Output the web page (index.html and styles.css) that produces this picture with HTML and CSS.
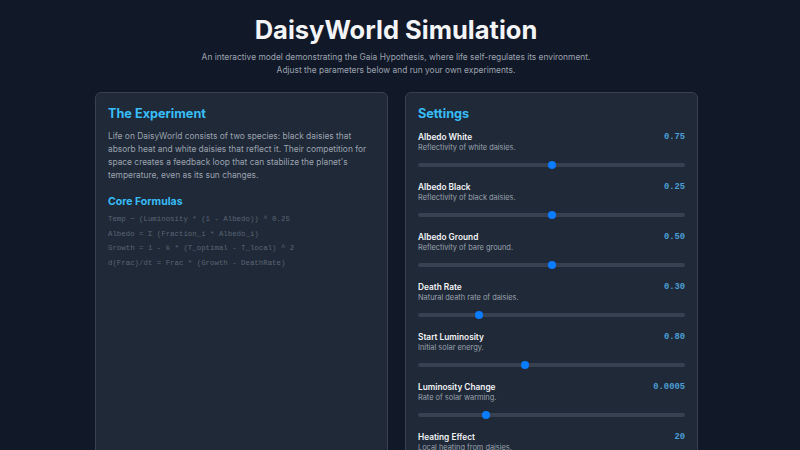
FILE: index.html
```html
<!DOCTYPE html>
<html lang="en">
<head>
<meta charset="utf-8">
<title>DaisyWorld Simulation</title>
<link rel="stylesheet" href="styles.css">
</head>
<body>
<header class="hero">
  <h1 class="hero-title">DaisyWorld Simulation</h1>
  <p class="hero-sub">An interactive model demonstrating the Gaia Hypothesis, where life self-regulates its environment.<br>Adjust the parameters below and run your own experiments.</p>
</header>
<main class="layout">
  <section class="panel">
    <h2 class="panel-title">The Experiment</h2>
    <p class="intro">Life on DaisyWorld consists of two species: black daisies that absorb heat and white daisies that reflect it. Their competition for space creates a feedback loop that can stabilize the planet's temperature, even as its sun changes.</p>
    <h3 class="sub-title">Core Formulas</h3>
    <div class="formulas">
      <div>Temp − (Luminosity * (1 - Albedo)) ^ 0.25</div>
      <div>Albedo = Σ (Fraction_i * Albedo_i)</div>
      <div>Growth = 1 - k * (T_optimal - T_local) ^ 2</div>
      <div>d(Frac)/dt = Frac * (Growth - DeathRate)</div>
    </div>
  </section>
  <section class="panel">
    <h2 class="panel-title">Settings</h2>
    <div class="setting">
      <div class="setting-head"><span class="setting-name">Albedo White</span><span class="setting-value">0.75</span></div>
      <div class="setting-desc">Reflectivity of white daisies.</div>
      <div class="track"><span class="thumb" style="left:50%"></span></div>
    </div>
    <div class="setting">
      <div class="setting-head"><span class="setting-name">Albedo Black</span><span class="setting-value">0.25</span></div>
      <div class="setting-desc">Reflectivity of black daisies.</div>
      <div class="track"><span class="thumb" style="left:50%"></span></div>
    </div>
    <div class="setting">
      <div class="setting-head"><span class="setting-name">Albedo Ground</span><span class="setting-value">0.50</span></div>
      <div class="setting-desc">Reflectivity of bare ground.</div>
      <div class="track"><span class="thumb" style="left:50%"></span></div>
    </div>
    <div class="setting">
      <div class="setting-head"><span class="setting-name">Death Rate</span><span class="setting-value">0.30</span></div>
      <div class="setting-desc">Natural death rate of daisies.</div>
      <div class="track"><span class="thumb" style="left:22.9%"></span></div>
    </div>
    <div class="setting">
      <div class="setting-head"><span class="setting-name">Start Luminosity</span><span class="setting-value">0.80</span></div>
      <div class="setting-desc">Initial solar energy.</div>
      <div class="track"><span class="thumb" style="left:40.2%"></span></div>
    </div>
    <div class="setting">
      <div class="setting-head"><span class="setting-name">Luminosity Change</span><span class="setting-value">0.0005</span></div>
      <div class="setting-desc">Rate of solar warming.</div>
      <div class="track"><span class="thumb" style="left:25.6%"></span></div>
    </div>
    <div class="setting">
      <div class="setting-head"><span class="setting-name">Heating Effect</span><span class="setting-value">20</span></div>
      <div class="setting-desc">Local heating from daisies.</div>
      <div class="track"><span class="thumb" style="left:50%"></span></div>
    </div>
  </section>
</main>
</body>
</html>
```
FILE: styles.css
```css
* { box-sizing: border-box; }
html, body { margin: 0; padding: 0; }
body {
  background: #111827;
  color: #e5e7eb;
  font-family: Inter, "Noto Sans", sans-serif;
  height: 450px;
  overflow: hidden;
}
.hero { text-align: center; padding-top: 13px; padding-right: 8px; }
.hero-title {
  margin: 0;
  font-size: 25.5px;
  line-height: 34px;
  font-weight: 700;
  color: #f3f4f6;
}
.hero-sub {
  margin: 4px 0 0;
  font-size: 8.4px;
  line-height: 13px;
  color: #9ca3af;
}
.layout {
  display: grid;
  grid-template-columns: 293px 293px;
  gap: 17px;
  width: 603px;
  margin: 15px 0 0 95px;
}
.panel {
  background: #1f2937;
  border: 1px solid #374151;
  border-radius: 6px;
  padding: 13px 12px 12px;
  height: 400px;
}
.panel-title {
  margin: 0;
  font-size: 12.7px;
  line-height: 16px;
  font-weight: 700;
  color: #38bdf8;
}
.intro {
  margin: 8px 0 0;
  font-size: 8.4px;
  line-height: 13px;
  color: #9ca3af;
}
.sub-title {
  margin: 12px 0 0;
  font-size: 10.5px;
  line-height: 16px;
  font-weight: 700;
  color: #38bdf8;
}
.formulas {
  margin-top: 2px;
  font-family: "Liberation Mono", "DejaVu Sans Mono", monospace;
  font-size: 7.4px;
  line-height: 14.6px;
  color: #5b6575;
}
.setting { padding-top: 9px; }
.setting + .setting { padding-top: 14px; }
.setting-head {
  display: flex;
  justify-content: space-between;
  align-items: center;
  height: 12px;
}
.setting-name {
  font-size: 8.3px;
  font-weight: 600;
  color: #f3f4f6;
}
.setting-value {
  font-family: "Liberation Mono", "DejaVu Sans Mono", monospace;
  font-size: 8.8px;
  font-weight: 700;
  color: #4b9fd6;
}
.setting-desc {
  font-size: 7.4px;
  line-height: 10px;
  color: #9ca3af;
}
.track {
  position: relative;
  margin-top: 10px;
  height: 4px;
  border-radius: 2px;
  background: #374151;
}
.thumb {
  position: absolute;
  top: 50%;
  width: 8px;
  height: 8px;
  margin: -4px 0 0 -4px;
  border-radius: 50%;
  background: #0a7cff;
}
```
